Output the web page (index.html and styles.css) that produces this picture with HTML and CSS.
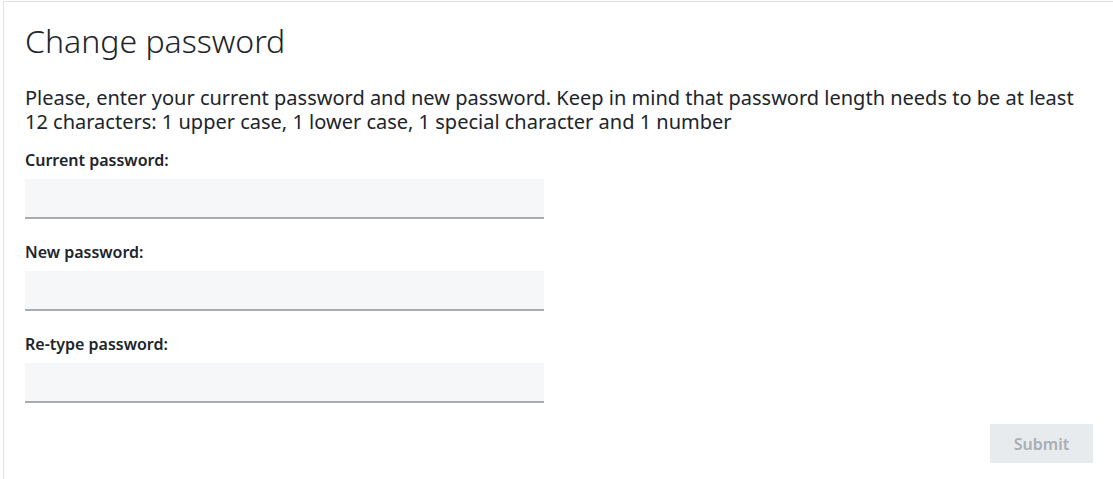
FILE: index.html
```html
<!DOCTYPE html>
<html lang="en">
<head>
  <meta charset="UTF-8">
  <meta name="viewport" content="width=device-width, initial-scale=1.0">
  <title>Change password</title>
  <link rel="stylesheet" href="styles.css">
</head>
<body>
  <div class="panel">
    <h1>Change password</h1>
    <p class="intro">Please, enter your current password and new password. Keep in mind that password length needs to be at least 12 characters: 1 upper case, 1 lower case, 1 special character and 1 number</p>

    <form class="pw-form" onsubmit="return false">
      <div class="field">
        <label for="current">Current password:</label>
        <input id="current" type="password">
      </div>
      <div class="field">
        <label for="new">New password:</label>
        <input id="new" type="password">
      </div>
      <div class="field">
        <label for="retype">Re-type password:</label>
        <input id="retype" type="password">
      </div>
      <div class="actions">
        <button class="btn" type="submit" disabled>Submit</button>
      </div>
    </form>
  </div>
</body>
</html>
```

FILE: styles.css
```css
html, body {
  margin: 0;
  padding: 0;
  background: #fff;
}

body {
  font-family: 'Noto Sans', 'Open Sans', sans-serif;
  color: #20242b;
  padding: 1px 0 0 3px;
}

.panel {
  border-top: 1px solid #e2e2e2;
  border-left: 1px solid #e2e2e2;
  padding: 18px 20px 20px 21px;
  min-height: 500px;
  box-sizing: border-box;
}

h1 {
  font-size: 32px;
  font-weight: 300;
  margin: 0;
  line-height: 42px;
}

.intro {
  font-size: 20px;
  line-height: 24px;
  margin: 24px 0 0;
}

.pw-form {
  margin-top: 16px;
}

.field {
  display: flex;
  flex-direction: column;
  margin-bottom: 23px;
}

.field label {
  font-size: 16px;
  font-weight: 600;
  line-height: 20px;
  margin-bottom: 9px;
}

.field input {
  width: 519px;
  height: 40px;
  box-sizing: border-box;
  border: none;
  border-bottom: 2px solid #a8adb3;
  background: #f6f7f9;
  padding: 0 12px;
  font: inherit;
  outline: none;
}

.actions {
  display: flex;
  justify-content: flex-end;
  margin-top: -2px;
}

.btn {
  font-family: inherit;
  font-size: 16px;
  font-weight: 600;
  color: #a9aeb5;
  background: #e8ebee;
  border: none;
  width: 103px;
  height: 39px;
  cursor: pointer;
}

.btn:disabled {
  cursor: default;
}
```
